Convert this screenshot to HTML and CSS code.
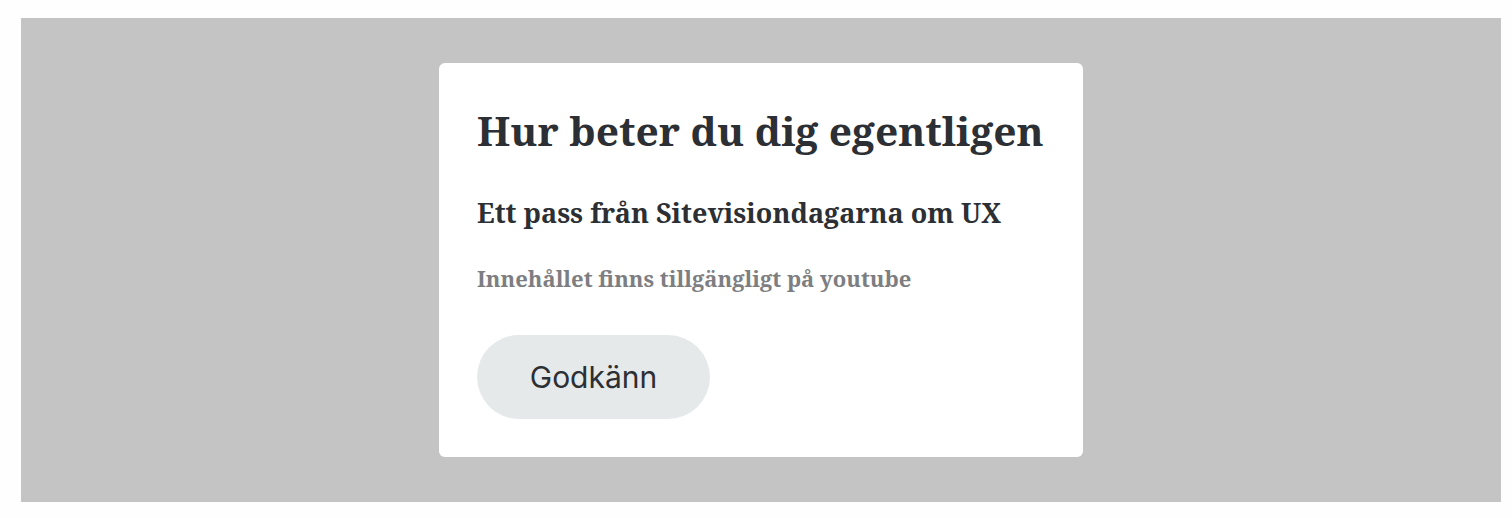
FILE: index.html
```html
<!DOCTYPE html>
<html>
<head>
    <title>Hur beter du dig egentligen</title>
    <link rel="stylesheet" href="styles.css">
</head>
<body>
    <div class="overlay">
        <div class="dialog">
            <h1 class="title">Hur beter du dig egentligen</h1>
            <h2 class="subtitle">Ett pass från Sitevisiondagarna om UX</h2>
            <p class="note">Innehållet finns tillgängligt på youtube</p>
            <button class="accept">Godkänn</button>
        </div>
    </div>
</body>
</html>
```

FILE: styles.css
```css
body { margin: 0; padding: 18px 11px 16px 21px; background: #fefefe; }
.overlay { background: #c4c4c4; height: 484px; display: flex; align-items: center; justify-content: center; }
.dialog { background: #fff; width: 644px; height: 394px; box-sizing: border-box; padding: 43px 38px 38px; border-radius: 6px; }
.title { font-family: "Noto Serif", "Liberation Serif", serif; font-weight: bold; font-size: 40.7px; line-height: 48px; color: #2c2f33; margin: 0 0 43px; white-space: nowrap; }
.subtitle { font-family: "Noto Serif", "Liberation Serif", serif; font-weight: bold; font-size: 27px; line-height: 32px; color: #2c2f33; margin: 0 0 35px; white-space: nowrap; }
.note { font-family: "Noto Serif", "Liberation Serif", serif; font-weight: bold; font-size: 22px; line-height: 28px; color: #7d7e82; margin: 0 0 43px; }
.accept { display: block; font-family: Inter, sans-serif; font-size: 30px; color: #2c2f33; background: #e6e9ea; border: none; border-radius: 42px; width: 233px; height: 84px; padding: 0; cursor: pointer; }
```
